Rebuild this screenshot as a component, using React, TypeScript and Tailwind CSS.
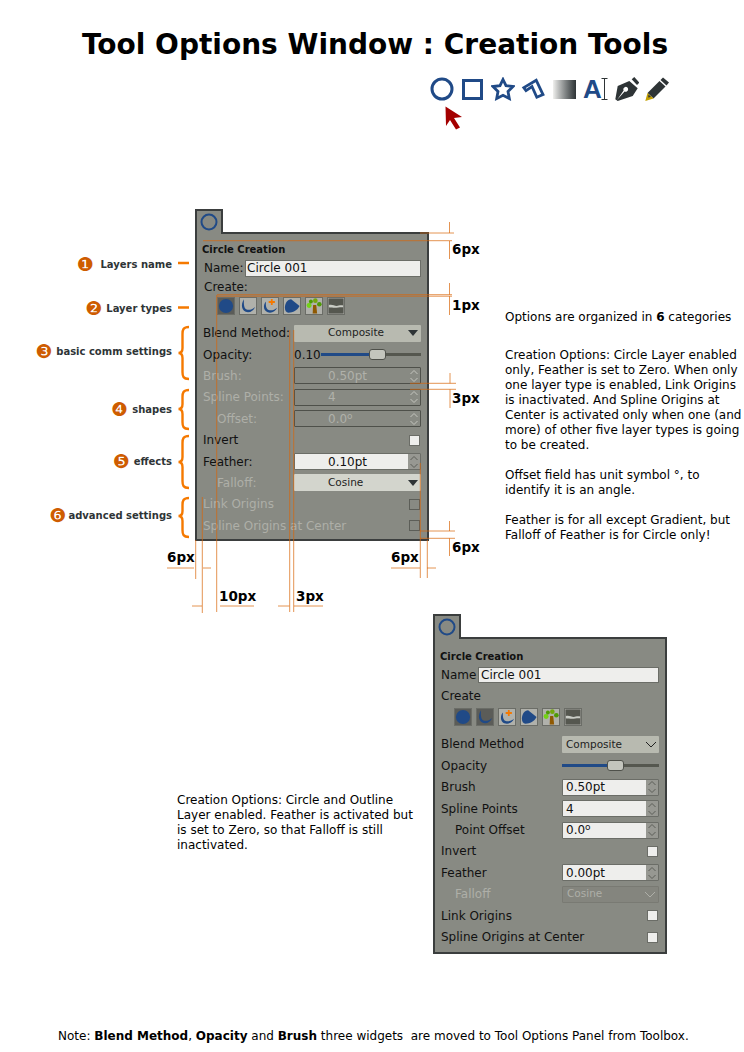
import React from "react";

const BLUE = "#204a87";

function Spin({ disabled }: { disabled?: boolean }) {
  const stroke = disabled ? "#c4c5be" : "#5c5e58";
  return (
    <svg width="10" height="16" viewBox="0 0 10 16" className="shrink-0" fill="none" stroke={stroke} strokeWidth="1">
      <path d="M1.5 6 L5 2.5 L8.5 6" />
      <path d="M1.5 10 L5 13.5 L8.5 10" />
    </svg>
  );
}

const Degree = () => (
  <span>
    0.0<span className="relative top-[-4px] text-[9px] leading-none">o</span>
  </span>
);

function SpinInput({
  value,
  disabled,
  offset,
}: {
  value: React.ReactNode;
  disabled?: boolean;
  offset?: boolean;
}) {
  return (
    <div
      className={`flex h-[17px] flex-1 items-center rounded-[1px] border ${
        disabled ? "border-[#4e504a] text-[#b0b1aa]" : "border-[#6b6d67] text-[#111]"
      }`}
    >
      <div
        className={`flex h-full flex-1 items-center text-[12px] ${offset ? "pl-[33px]" : "pl-[3px]"} ${
          disabled ? "" : "bg-[#eeeeec]"
        }`}
      >
        {value}
      </div>
      <div className={`flex h-full w-[12px] items-center justify-center ${disabled ? "" : "bg-[#979892]"}`}>
        <Spin disabled={disabled} />
      </div>
    </div>
  );
}

function Check({ disabled }: { disabled?: boolean }) {
  return (
    <div
      className={`mr-[1px] h-[11px] w-[11px] border ${
        disabled ? "border-[#5c5e58]" : "border-[#6b6d67] bg-[#eeeeec]"
      }`}
    ></div>
  );
}

function Combo({
  value,
  bg,
  arrow,
  offset,
  text,
}: {
  value: string;
  bg: string;
  arrow: "solid" | "chevron";
  offset?: boolean;
  text: string;
}) {
  return (
    <div className={`flex h-[17px] flex-1 items-center rounded-[1px] text-[10.5px] ${bg} ${text}`}>
      <div className={`flex-1 ${offset ? "pl-[34px]" : "pl-[4px]"}`}>{value}</div>
      {arrow === "solid" ? (
        <svg width="10" height="6" viewBox="0 0 10 6" className="mr-[3px]">
          <path d="M0 0 H10 L5 6 Z" fill="#2e3436" />
        </svg>
      ) : (
        <svg width="12" height="7" viewBox="0 0 12 7" fill="none" className="mr-[2px]" stroke="currentColor" strokeWidth="1">
          <path d="M1 1 L6 6 L11 1" />
        </svg>
      )}
    </div>
  );
}

function Row({
  label,
  labelWidth,
  indent,
  disabled,
  children,
}: {
  label: string;
  labelWidth: number;
  indent?: boolean;
  disabled?: boolean;
  children?: React.ReactNode;
}) {
  return (
    <div className="flex h-[21.4px] items-center">
      <div
        className={`shrink-0 whitespace-nowrap text-[12px] ${indent ? "pl-[14px]" : ""} ${
          disabled ? "text-[#aeafa8]" : "text-[#111]"
        }`}
        style={{ width: labelWidth }}
      >
        {label}
      </div>
      <div className="flex min-w-0 flex-1 items-center justify-end">{children}</div>
    </div>
  );
}

function TypeIcon({ kind, active }: { kind: number; active?: boolean }) {
  return (
    <div
      className={`h-[18px] w-[18px] shrink-0 border border-[#6b6d67] ${active ? "bg-[#5b5c58]" : "bg-[#b0b1ab]"}`}
    >
      <svg width="16" height="16" viewBox="0 0 18 18">
        {kind === 0 && <circle cx="9" cy="9" r="8" fill={BLUE} />}
        {kind === 1 && (
          <path d="M4.5 1.5 C0.5 7 1.5 16 9 16 C12.5 16 15.5 13.5 17 10 C14 12.5 10.5 14 7.5 13 C4.5 12 4 7 4.5 1.5 Z" fill={BLUE} />
        )}
        {kind === 2 && (
          <g>
            <path d="M4.5 4 C0.5 8 1.5 16.5 9 16.5 C12.5 16.5 15.5 14 17 11 C14 13.5 10.5 14.5 7.5 13.5 C4.5 12.5 4 8 4.5 4 Z" fill={BLUE} />
            <path d="M11 1 V8 M7.5 4.5 H14.5" stroke="#f57900" strokeWidth="2" />
          </g>
        )}
        {kind === 3 && <path d="M1 11 C1 6 4 1.5 8 1.5 L17.5 9 C15 14 10 16.5 5 16.5 C2.5 16.5 1 14 1 11 Z" fill={BLUE} />}
        {kind === 4 && (
          <g>
            <path d="M8 8 H11.5 L12.5 17.5 H7.5 Z" fill="#8f5902" />
            <circle cx="3.5" cy="8.5" r="2.8" fill="#73d216" />
            <circle cx="5.5" cy="4" r="2.2" fill="#4e9a06" />
            <circle cx="10.5" cy="3" r="2.6" fill="#73a70e" />
            <circle cx="15" cy="7" r="2.6" fill="#4e9a06" />
          </g>
        )}
        {kind === 5 && (
          <g>
            <rect x="0.5" y="0.5" width="17" height="17" fill="#55574f" />
            <path d="M1 8 C5 6.5 8 10 12 8.5 C14 8 16 8 17 8.5 L17 10.5 C13 10 10 11.5 6 11 C4 10.5 2 11 1 10.5 Z" fill="#c9ccc5" />
          </g>
        )}
      </svg>
    </div>
  );
}

function Panel({
  children,
  topPad,
}: {
  children: React.ReactNode;
  topPad: string;
}) {
  return (
    <div className="w-[234px] shrink-0">
      <div className="relative z-10 -mb-[2px] h-[25px] w-[28px] border-x-2 border-t-2 border-[#3b3e3e] bg-[#888a83]">
        <svg width="20" height="20" viewBox="0 0 20 20" className="ml-[2px] mt-[1px]">
          <circle cx="10" cy="10" r="7.5" fill="none" stroke={BLUE} strokeWidth="2" />
        </svg>
      </div>
      <div className={`border-2 border-[#3b3e3e] bg-[#888a83] px-[6px] ${topPad}`}>
        <div className="-ml-[1px] flex h-[19px] items-center text-[10px] font-bold text-[#111]">Circle Creation</div>
        {children}
      </div>
    </div>
  );
}

function FirstPanel() {
  const w = 91;
  return (
    <Panel topPad="pt-[5.5px] pb-[3px]">
      <div className="flex h-[19px] items-center text-[12px] text-[#111]">
        <div className="w-[42px] shrink-0 pl-[1px]">Name:</div>
        <div className="flex h-[17px] flex-1 items-center border border-[#6b6d67] bg-[#eeeeec] pl-[1px]">Circle 001</div>
      </div>
      <div className="flex h-[19px] items-center pl-[1px] text-[12px] text-[#111]">Create:</div>
      <div className="ml-[14px] flex h-[18px] gap-[4px]">
        {[0, 1, 2, 3, 4, 5].map((k) => (
          <TypeIcon key={k} kind={k} active={k === 0} />
        ))}
      </div>
      <div className="mt-[8px]">
        <Row label="Blend Method:" labelWidth={w}>
          <Combo value="Composite" bg="bg-[#b8bab0]" arrow="solid" offset text="text-[#222]" />
        </Row>
        <Row label="Opacity:" labelWidth={w}>
          <span className="text-[12px] text-[#111]">0.10</span>
          <Slider at="left-[48%]" fill="w-[48%]" />
        </Row>
        <Row label="Brush:" labelWidth={w} disabled>
          <SpinInput value="0.50pt" disabled offset />
        </Row>
        <Row label="Spline Points:" labelWidth={w} disabled>
          <SpinInput value="4" disabled offset />
        </Row>
        <Row label="Offset:" labelWidth={w} indent disabled>
          <SpinInput value={<Degree />} disabled offset />
        </Row>
        <Row label="Invert" labelWidth={w}>
          <Check />
        </Row>
        <Row label="Feather:" labelWidth={w}>
          <SpinInput value="0.10pt" offset />
        </Row>
        <Row label="Falloff:" labelWidth={w} indent disabled>
          <Combo value="Cosine" bg="bg-[#d3d5cd]" arrow="solid" offset text="text-[#222]" />
        </Row>
        <Row label="Link Origins" labelWidth={w} disabled>
          <Check disabled />
        </Row>
        <Row label="Spline Origins at Center" labelWidth={w} disabled>
          <Check disabled />
        </Row>
      </div>
    </Panel>
  );
}

function Slider({ at, fill }: { at: string; fill: string }) {
  return (
    <div className="relative h-[3px] flex-1 bg-[#55574f]">
      <div className={`h-full bg-[#204a87] ${fill}`}></div>
      <div className={`absolute top-[-4px] h-[11px] w-[17px] rounded-[3px] border border-[#4e504a] bg-[#c3c5bd] ${at}`}></div>
    </div>
  );
}

function SecondPanel() {
  const w = 121;
  return (
    <Panel topPad="pt-[7.5px] pb-[4.4px]">
      <div className="flex h-[19px] items-center text-[12px] text-[#111]">
        <div className="w-[37px] shrink-0">Name</div>
        <div className="flex h-[16px] flex-1 items-center border border-[#6b6d67] bg-[#eeeeec] pl-[2px]">Circle 001</div>
      </div>
      <div className="flex h-[23px] items-center text-[12px] text-[#111]">Create</div>
      <div className="ml-[13px] flex h-[18px] gap-[4px]">
        {[0, 1, 2, 3, 4, 5].map((k) => (
          <TypeIcon key={k} kind={k} active={k < 2} />
        ))}
      </div>
      <div className="mt-[8.3px]">
        <Row label="Blend Method" labelWidth={w}>
          <Combo value="Composite" bg="bg-[#b8bab0]" arrow="chevron" text="text-[#222]" />
        </Row>
        <Row label="Opacity" labelWidth={w}>
          <Slider at="left-[46%]" fill="w-[46%]" />
        </Row>
        <Row label="Brush" labelWidth={w}>
          <SpinInput value="0.50pt" />
        </Row>
        <Row label="Spline Points" labelWidth={w}>
          <SpinInput value="4" />
        </Row>
        <Row label="Point Offset" labelWidth={w} indent>
          <SpinInput value={<Degree />} />
        </Row>
        <Row label="Invert" labelWidth={w}>
          <Check />
        </Row>
        <Row label="Feather" labelWidth={w}>
          <SpinInput value="0.00pt" />
        </Row>
        <Row label="Falloff" labelWidth={w} indent disabled>
          <Combo value="Cosine" bg="bg-[#84857e] border border-[#797a73]" arrow="chevron" text="text-[#aeafa8]" />
        </Row>
        <Row label="Link Origins" labelWidth={w}>
          <Check />
        </Row>
        <Row label="Spline Origins at Center" labelWidth={w}>
          <Check />
        </Row>
      </div>
    </Panel>
  );
}

function Toolbar() {
  return (
    <div className="ml-[430px] flex h-[26px] items-center">
      <svg width="24" height="24" viewBox="0 0 24 24" fill="none">
        <circle cx="12" cy="12" r="10" stroke={BLUE} strokeWidth="3" />
      </svg>
      <svg width="21" height="21" viewBox="0 0 21 21" className="ml-[8px]" fill="none">
        <rect x="1.5" y="1.5" width="18" height="18" stroke={BLUE} strokeWidth="3" />
      </svg>
      <svg width="24" height="24" viewBox="0 0 24 24" className="ml-[8px]" fill="none">
        <path d="M12 2.5 L15 8.7 L22 9.5 L17 14.5 L18.3 21.5 L12 18.3 L5.7 21.5 L7 14.5 L2 9.5 L9 8.7 Z" stroke={BLUE} strokeWidth="2.8" strokeLinejoin="miter" />
      </svg>
      <svg width="25" height="22" viewBox="0 0 25 22" className="ml-[6px]" fill="none">
        <path d="M2.8 9.6 L15.2 2.2 L22 16.6 L15.8 19.2 L11 8.5 L5 12.6 Z" stroke={BLUE} strokeWidth="2.8" />
      </svg>
      <div className="ml-[7px] h-[19px] w-[23px] bg-gradient-to-r from-[#f0f0ee] to-[#2e3436]"></div>
      <span className="ml-[7px] w-[18px] font-['Liberation_Sans',sans-serif] text-[26px] font-bold leading-none text-[#204a87]">A</span>
      <svg width="7" height="22" viewBox="0 0 7 22" fill="none" stroke="#2e3436" strokeWidth="1">
        <path d="M0.5 0.5 H6.5 M3.5 0.5 V21.5 M0.5 21.5 H6.5" />
      </svg>
      <svg width="24" height="24" viewBox="0 0 24 24" className="ml-[7px]">
        <path d="M16.7 2.3 L19.3 0 L24.3 5.7 L22 8 Z" fill="#2e3436" />
        <path fillRule="evenodd" d="M14.3 4 L22.7 11.3 L17.7 19 L2.7 24 L0.3 22.3 L2.7 9 Z M2 23 L9.6 14.4 A2.4 2.4 0 1 0 8.6 13.4 Z" fill="#2e3436" />
      </svg>
      <svg width="24" height="24" viewBox="0 0 24 24" className="ml-[6px]">
        <path d="M18 0.5 L24 5.5 L21.5 8.5 L15.5 3 Z" fill="#2e3436" />
        <path d="M14.5 4 L20.5 9.5 L8.5 21.5 L2.5 16 Z" fill="#2e3436" />
        <path d="M2.5 16 L8.5 21.5 L0.3 24 Z" fill="#c4a000" />
        <path d="M3.5 17.5 L6 20 L3.2 20.4 Z" fill="#2e3436" />
      </svg>
    </div>
  );
}

function Callout({ num, text, top, gap }: { num: string; text: string; top: string; gap: string }) {
  return (
    <div className={`flex h-[20px] items-center justify-end pr-[23px] ${top} ${gap}`}>
      <span className="text-[19px] leading-none text-[#ce5c00]">{num}</span>
      <span className="whitespace-nowrap text-[10px] font-bold text-[#2e3436]">{text}</span>
    </div>
  );
}

// measuring lines and braces drawn over the first panel
function Overlay() {
  const lines = [
    [203, 240.7, 452, 240.7],
    [420, 233, 454, 233],
    [449.5, 222, 449.5, 233],
    [449.5, 241, 449.5, 259],
    [217, 294.7, 452, 294.7],
    [217, 296.2, 452, 296.2],
    [449.5, 283, 449.5, 294.7],
    [449.5, 296.2, 449.5, 315],
    [216.7, 295, 216.7, 612],
    [289.7, 330, 289.7, 612],
    [293.7, 330, 293.7, 612],
    [202.3, 497, 202.3, 613],
    [195.7, 540, 195.7, 579],
    [420.3, 463, 420.3, 578],
    [427.3, 540, 427.3, 578],
    [410, 383.3, 456, 383.3],
    [410, 389.3, 456, 389.3],
    [450, 373, 450, 383.3],
    [450, 389.3, 450, 408],
    [420, 531, 455, 531],
    [420, 538.3, 455, 538.3],
    [449.5, 521, 449.5, 531],
    [449.5, 538.3, 449.5, 556],
    [167, 568, 194, 568],
    [203, 568, 211, 568],
    [391, 568, 420, 568],
    [427, 568, 436, 568],
    [192, 606, 202, 606],
    [220, 606, 254, 606],
    [278, 606, 289.5, 606],
    [294, 606, 323, 606],
  ];
  const brace = (top: number, tip: number, bottom: number) =>
    `M189 ${top} C183 ${top} 182.5 ${top + 3} 182.5 ${top + 7} L182.5 ${tip - 5} C182.5 ${tip - 2} 181 ${tip} 178.5 ${tip} C181 ${tip} 182.5 ${tip + 2} 182.5 ${tip + 5} L182.5 ${bottom - 7} C182.5 ${bottom - 3} 183 ${bottom} 189 ${bottom}`;
  return (
    <svg width="744" height="1052" className="pointer-events-none absolute left-0 top-0 z-20">
      <g stroke="#d9660a" strokeOpacity="0.7" strokeWidth="1">
        {lines.map((l, i) => (
          <line key={i} x1={l[0]} y1={l[1]} x2={l[2]} y2={l[3]} />
        ))}
      </g>
      <g fill="none" stroke="#f57900" strokeWidth="2.4">
        <path d="M178 263 H189 M178 307.5 H189" />
        <path d={brace(327, 353, 379)} />
        <path d={brace(390, 409, 429)} />
        <path d={brace(436, 462, 488)} />
        <path d={brace(498, 516, 537)} />
      </g>
    </svg>
  );
}

function Px({ text, className }: { text: string; className: string }) {
  return (
    <span className={`absolute z-30 -translate-y-1/2 text-[13.5px] font-bold leading-none text-black ${className}`}>
      {text}
    </span>
  );
}

export default function App() {
  return (
    <div className="relative h-[1052px] w-[744px] overflow-hidden bg-white font-['DejaVu_Sans',sans-serif] text-black">
      <h1 className="pl-[6px] pt-[25px] text-center text-[28px] font-bold leading-[40px]">Tool Options Window : Creation Tools</h1>
      <div className="mt-[11px]">
        <Toolbar />
      </div>
      <svg width="18" height="24" viewBox="0 0 18 24" className="ml-[445px] mt-[4px] block">
        <path d="M0.5 0.5 L17 11 L9 12 L15 21.5 L11 23.5 L5 14 L1 20 Z" fill="#a40000" />
      </svg>

      <div className="mt-[79px] flex h-[331px] items-start">
        <div className="w-[195px] shrink-0">
          <Callout num="❶" text="Layers name" top="mt-[45px]" gap="gap-[7px]" />
          <Callout num="❷" text="Layer types" top="mt-[24px]" gap="gap-[4px]" />
          <Callout num="❸" text="basic comm settings" top="mt-[23px]" gap="gap-[4px]" />
          <Callout num="❹" text="shapes" top="mt-[38px]" gap="gap-[4px]" />
          <Callout num="❺" text="effects" top="mt-[32px]" gap="gap-[4px]" />
          <Callout num="❻" text="advanced settings" top="mt-[34px]" gap="gap-[2px]" />
        </div>
        <FirstPanel />
        <div className="ml-[76px] w-[240px] pt-[101px] text-[12px] leading-[15px]">
          <p className="whitespace-nowrap">
            Options are organized in <b>6</b> categories
          </p>
          <p className="mt-[23px] whitespace-nowrap">
            Creation Options: Circle Layer enabled
            <br />
            only, Feather is set to Zero. When only
            <br />
            one layer type is enabled, Link Origins
            <br />
            is inactivated. And Spline Origins at
            <br />
            Center is activated only when one (and
            <br />
            more) of other five layer types is going
            <br />
            to be created.
          </p>
          <p className="mt-[15px] whitespace-nowrap">
            Offset field has unit symbol °, to
            <br />
            identify it is an angle.
          </p>
          <p className="mt-[15px] whitespace-nowrap">
            Feather is for all except Gradient, but
            <br />
            Falloff of Feather is for Circle only!
          </p>
        </div>
      </div>

      <div className="mt-[74px] flex items-start pl-[177px]">
        <p className="w-[256px] shrink-0 pt-[178.5px] text-[12px] leading-[15px]">
          Creation Options: Circle and Outline
          <br />
          Layer enabled. Feather is activated but
          <br />
          is set to Zero, so that Falloff is still
          <br />
          inactivated.
        </p>
        <SecondPanel />
      </div>

      <p className="absolute bottom-[8px] left-[58px] whitespace-nowrap text-[12px] leading-[15px]">
        Note: <b>Blend Method</b>, <b>Opacity</b> and <b>Brush</b> three widgets&nbsp; are moved to Tool Options Panel from Toolbox.
      </p>

      <Overlay />
      <Px text="6px" className="left-[452px] top-[250px]" />
      <Px text="1px" className="left-[452px] top-[306px]" />
      <Px text="3px" className="left-[452px] top-[399px]" />
      <Px text="6px" className="left-[452px] top-[548px]" />
      <Px text="6px" className="left-[167px] top-[558px]" />
      <Px text="6px" className="left-[391px] top-[558px]" />
      <Px text="10px" className="left-[219px] top-[597px]" />
      <Px text="3px" className="left-[296px] top-[597px]" />
    </div>
  );
}
